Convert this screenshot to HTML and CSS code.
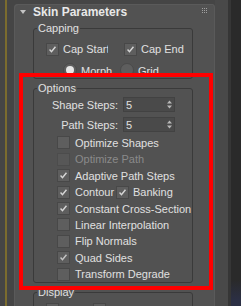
FILE: index.html
```html
<!DOCTYPE html>
<html>
<head>
<meta charset="utf-8">
<link rel="stylesheet" href="styles.css">
</head>
<body>
<div class="app">
  <div class="gutter"><div class="gutter-line"></div></div>
  <div class="panel">
    <div class="rollout-head">
      <span class="tri"></span>
      <span class="head-title">Skin Parameters</span>
      <svg class="grip" width="5" height="5" viewBox="0 0 5 5">
        <rect x="0" y="0" width="1" height="1"/><rect x="2" y="0" width="1" height="1"/><rect x="4" y="0" width="1" height="1"/>
        <rect x="0" y="2" width="1" height="1"/><rect x="2" y="2" width="1" height="1"/><rect x="4" y="2" width="1" height="1"/>
        <rect x="0" y="4" width="1" height="1"/><rect x="2" y="4" width="1" height="1"/><rect x="4" y="4" width="1" height="1"/>
      </svg>
    </div>
    <div class="rollout-body">
      <div class="group capping">
        <div class="group-title">Capping</div>
        <div class="cap-row">
          <div class="check cap-start"><span class="box on"><svg viewBox="0 0 13 13"><path d="M3 6.5 L5.3 9 L10 3.3"/></svg></span><span class="clip">Cap Start</span></div>
          <div class="check"><span class="box on"><svg viewBox="0 0 13 13"><path d="M3 6.5 L5.3 9 L10 3.3"/></svg></span><span>Cap End</span></div>
        </div>
        <div class="radio-row">
          <div class="radio-item morph"><span class="radio on"></span><span>Morph</span></div>
          <div class="radio-item"><span class="radio"></span><span>Grid</span></div>
        </div>
      </div>

      <div class="group options">
        <div class="group-title">Options</div>
        <div class="spin-row">
          <span class="spin-label">Shape Steps:</span>
          <span class="spinner"><span class="spin-val">5</span><svg class="arrows" width="5" height="9" viewBox="0 0 5 9"><path d="M0 3.5 L2.5 0.5 L5 3.5 Z M0 5.5 L2.5 8.5 L5 5.5 Z"/></svg></span>
        </div>
        <div class="spin-row">
          <span class="spin-label">Path Steps:</span>
          <span class="spinner"><span class="spin-val">5</span><svg class="arrows" width="5" height="9" viewBox="0 0 5 9"><path d="M0 3.5 L2.5 0.5 L5 3.5 Z M0 5.5 L2.5 8.5 L5 5.5 Z"/></svg></span>
        </div>
        <div class="check-list">
          <div class="check opt-row"><span class="box"></span><span>Optimize Shapes</span></div>
          <div class="check opt-row disabled"><span class="box"></span><span>Optimize Path</span></div>
          <div class="check opt-row"><span class="box on"><svg viewBox="0 0 13 13"><path d="M3 6.5 L5.3 9 L10 3.3"/></svg></span><span>Adaptive Path Steps</span></div>
          <div class="opt-row split">
            <div class="check contour"><span class="box on"><svg viewBox="0 0 13 13"><path d="M3 6.5 L5.3 9 L10 3.3"/></svg></span><span>Contour</span></div>
            <div class="check banking"><span class="box on"><svg viewBox="0 0 13 13"><path d="M3 6.5 L5.3 9 L10 3.3"/></svg></span><span>Banking</span></div>
          </div>
          <div class="check opt-row"><span class="box on"><svg viewBox="0 0 13 13"><path d="M3 6.5 L5.3 9 L10 3.3"/></svg></span><span>Constant Cross-Section</span></div>
          <div class="check opt-row"><span class="box"></span><span>Linear Interpolation</span></div>
          <div class="check opt-row"><span class="box"></span><span>Flip Normals</span></div>
          <div class="check opt-row"><span class="box on soft"><svg viewBox="0 0 13 13"><path d="M3 6.5 L5.3 9 L10 3.3"/></svg></span><span>Quad Sides</span></div>
          <div class="check opt-row"><span class="box"></span><span>Transform Degrade</span></div>
        </div>
      </div>

      <div class="group display">
        <div class="group-title">Display</div>
        <div class="disp-row">
          <span class="box"></span>
          <span class="box second"></span>
        </div>
      </div>
    </div>
  </div>
  <div class="side"></div>
  <div class="side-line"></div>
  <div class="scroll"></div>
</div>
<div class="highlight"></div>
</body>
</html>
```

FILE: styles.css
```css
html, body {
  margin: 0;
  padding: 0;
  width: 241px;
  height: 306px;
  overflow: hidden;
  background: #454545;
}
body {
  font-family: "Liberation Sans", Arial, sans-serif;
  font-size: 11px;
  color: #e0e0e0;
  position: relative;
}
.app {
  display: flex;
  height: 306px;
}
.gutter {
  width: 14px;
  flex: none;
  padding-left: 5px;
  box-sizing: border-box;
}
.gutter-line {
  width: 2px;
  height: 100%;
  background: #7b6c2e;
}
.panel {
  width: 201px;
  flex: none;
  margin-top: 4px;
  background: #525252;
  border-radius: 4px 4px 0 0;
  box-shadow: inset 1px 1px 0 #5a5a5a, inset -1px 0 0 #5a5a5a;
  overflow: hidden;
}
.side {
  width: 13px;
  flex: none;
  background: #494949;
}
.side-line {
  width: 3px;
  flex: none;
  background: #363636;
}
.scroll {
  flex: 1;
  background: linear-gradient(#2a2a2a 0, #2a2a2a 280px, #2b2f44 300px);
}
.rollout-head {
  height: 16px;
  display: flex;
  align-items: center;
  padding: 0 8px 0 6px;
}
.tri {
  width: 0;
  height: 0;
  border-left: 3px solid transparent;
  border-right: 3px solid transparent;
  border-top: 4px solid #c4c4c4;
  margin-right: 7px;
  margin-top: -1px;
}
.head-title {
  flex: 1;
  font-weight: bold;
  font-size: 12px;
  color: #e8e8e8;
}
.grip {
  fill: #a0a0a0;
  align-self: flex-start;
  margin-top: 4px;
}
.rollout-body {
  padding: 8px 22px 0 19px;
}
.group {
  border: 1px solid #3a3a3a;
  border-radius: 3px;
  padding-bottom: 3px;
}
.group + .group {
  margin-top: 9px;
}
.group-title {
  width: fit-content;
  height: 13px;
  line-height: 13px;
  margin: -7px 0 0 3px;
  padding: 0 1px;
  background: #525252;
}
.check {
  display: flex;
  align-items: center;
  gap: 5px;
  white-space: nowrap;
}
.box {
  width: 13px;
  height: 13px;
  box-sizing: border-box;
  flex: none;
  background: #5e5e5e;
  border: 1px solid #484848;
  display: inline-block;
}
.box svg {
  display: block;
  width: 11px;
  height: 11px;
  fill: none;
  stroke: #d6d6d6;
  stroke-width: 1.7;
}
.box.soft svg {
  stroke: #c4c4c4;
}
.cap-row {
  margin-top: 7px;
  height: 14px;
  display: flex;
  align-items: center;
  padding-left: 12px;
}
.cap-row .check {
  gap: 4px;
}
.cap-start {
  width: 78px;
  flex: none;
}
.clip {
  width: 45px;
  overflow: hidden;
}
.capping {
  padding-bottom: 1px;
}
.radio-row {
  margin-top: 6px;
  height: 15px;
  display: flex;
  align-items: center;
  padding-left: 29px;
}
.radio-item {
  display: flex;
  align-items: center;
  gap: 4px;
}
.radio-item span:last-child {
  padding-top: 2px;
}
.radio-item.morph {
  width: 57px;
  flex: none;
}
.radio {
  width: 14px;
  height: 14px;
  border-radius: 50%;
  box-sizing: border-box;
  background: #5e5e5e;
  border: 1px solid #4a4a4a;
  display: flex;
  align-items: center;
  justify-content: center;
}
.radio.on::after {
  content: "";
  width: 8px;
  height: 8px;
  border-radius: 50%;
  background: #e6e6e6;
}
.options {
  padding-bottom: 0;
}
.spin-row {
  margin-top: 2px;
  height: 15px;
  display: flex;
  align-items: center;
}
.spin-row + .spin-row {
  margin-top: 5px;
}
.spin-label {
  width: 84px;
  text-align: right;
  margin-right: 5px;
}
.spinner {
  width: 52px;
  height: 15px;
  box-sizing: border-box;
  background: #4a4a4a;
  border: 1px solid #424242;
  display: flex;
  align-items: center;
  padding-left: 2px;
}
.spin-val {
  flex: 1;
}
.arrows {
  fill: #b8b8b8;
  margin-right: 2px;
}
.check-list {
  margin-top: 2.8px;
  padding-left: 23px;
}
.opt-row {
  height: 16.4px;
}
.opt-row.disabled {
  color: #8a8a8a;
}
.opt-row.disabled .box {
  background: #575757;
  border-color: #4c4c4c;
}
.split {
  display: flex;
  align-items: center;
}
.contour {
  width: 59px;
  flex: none;
}
.banking {
  gap: 4px;
}
.disp-row {
  margin-top: 4px;
  display: flex;
  padding-left: 12px;
}
.disp-row .second {
  margin-left: 34px;
}
.highlight {
  position: absolute;
  left: 19px;
  top: 73px;
  width: 194px;
  height: 217px;
  box-sizing: border-box;
  border: 4px solid #ff0000;
}
```
